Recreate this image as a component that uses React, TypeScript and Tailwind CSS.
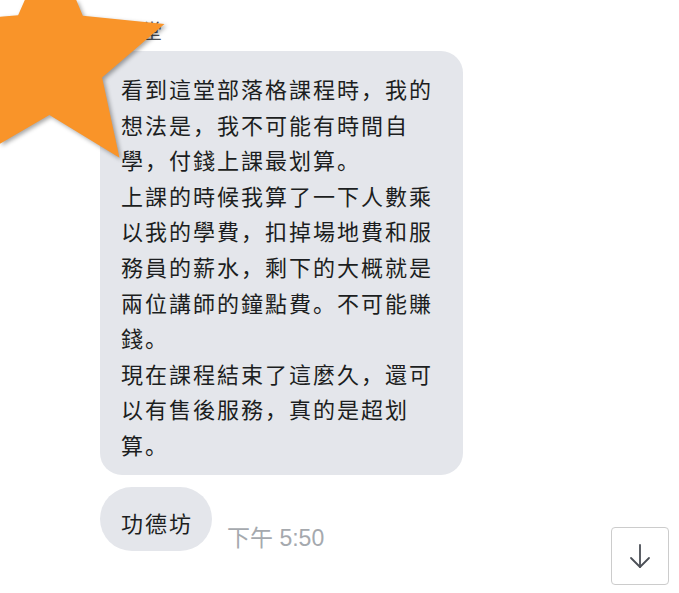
import React from "react";

const starPoints = (() => {
  const cx = 50, cy = 60, R = 120, r = 55;
  const pts: string[] = [];
  for (let i = 0; i < 10; i++) {
    const ang = ((-89.4 + i * 36) * Math.PI) / 180;
    const rad = i % 2 === 0 ? R : r;
    pts.push(`${(cx + rad * Math.cos(ang)).toFixed(1)},${(cy + rad * Math.sin(ang)).toFixed(1)}`);
  }
  return pts.join(" ");
})();

const font = { fontFamily: '"Noto Sans CJK SC", "Noto Sans", sans-serif' };

export default function App() {
  return (
    <div className="relative w-[679px] h-[593px] bg-white overflow-hidden" style={font}>
      <div className="flex flex-col items-start pl-[100px] pt-[14px]">
        <div className="text-[20px] leading-[34px] text-[#4b4f56] pl-[2px] h-[37px]">小學堂</div>
        <div className="w-[363px] rounded-[22px] bg-[#e4e6eb] pl-[21px] pr-[21px] pt-[20px] pb-[12px] text-[22px] leading-[35.6px] tracking-[2px] text-[#1c1e21]">
          看到這堂部落格課程時，我的想法是，我不可能有時間自學，付錢上課最划算。
          <br />
          上課的時候我算了一下人數乘以我的學費，扣掉場地費和服務員的薪水，剩下的大概就是兩位講師的鐘點費。不可能賺錢。
          <br />
          現在課程結束了這麼久，還可以有售後服務，真的是超划算。
        </div>
        <div className="flex items-end gap-[15px] mt-[12px]">
          <div className="h-[64px] rounded-full bg-[#e4e6eb] pl-[21px] pr-[19px] pt-[18px] text-[22px] leading-[35.6px] tracking-[2px] text-[#1c1e21]">
            功德坊
          </div>
          <div className="text-[23px] leading-[24px] text-[#a5a9ae] mb-[1px]" style={{ fontFamily: '"Liberation Sans", "Noto Sans CJK SC", sans-serif' }}>
            下午 5:50
          </div>
        </div>
      </div>

      <svg
        className="absolute left-0 top-0"
        width="200"
        height="200"
        viewBox="0 0 200 200"
        style={{ filter: "drop-shadow(2px 2px 2px rgba(0,0,0,0.35))" }}
      >
        <polygon points={starPoints} fill="#f99429" />
      </svg>

      <button className="absolute left-[611px] top-[527px] w-[58px] h-[58px] rounded-[4px] border-[1.5px] border-[#cccccc] bg-white flex items-center justify-center">
        <svg width="24" height="26" viewBox="0 0 24 26" fill="none" stroke="#4b4f56" strokeWidth="1.8" strokeLinecap="round" strokeLinejoin="round">
          <path d="M12 2v22" />
          <path d="M3 15l9 9 9-9" />
        </svg>
      </button>
    </div>
  );
}
